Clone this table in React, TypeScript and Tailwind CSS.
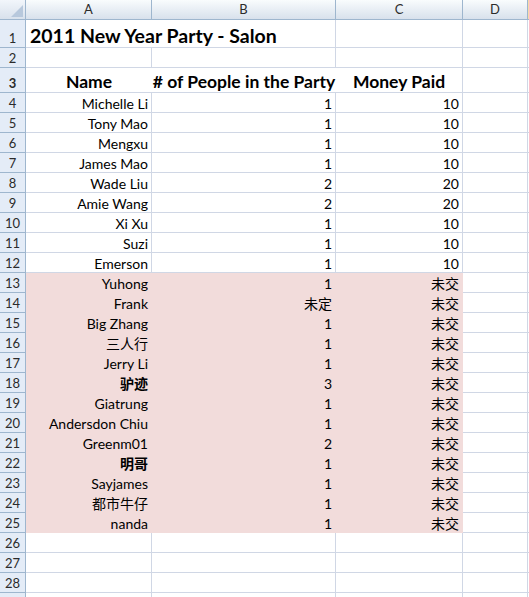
import React from 'react';

type Row = {
  name: string;
  people: string;
  money: string;
  pink?: boolean;
  boldName?: boolean;
};

const data: Row[] = [
  { name: 'Michelle Li', people: '1', money: '10' },
  { name: 'Tony Mao', people: '1', money: '10' },
  { name: 'Mengxu', people: '1', money: '10' },
  { name: 'James Mao', people: '1', money: '10' },
  { name: 'Wade Liu', people: '2', money: '20' },
  { name: 'Amie Wang', people: '2', money: '20' },
  { name: 'Xi Xu', people: '1', money: '10' },
  { name: 'Suzi', people: '1', money: '10' },
  { name: 'Emerson', people: '1', money: '10' },
  { name: 'Yuhong', people: '1', money: '未交', pink: true },
  { name: 'Frank', people: '未定', money: '未交', pink: true },
  { name: 'Big Zhang', people: '1', money: '未交', pink: true },
  { name: '三人行', people: '1', money: '未交', pink: true },
  { name: 'Jerry Li', people: '1', money: '未交', pink: true },
  { name: '驴迹', people: '3', money: '未交', pink: true, boldName: true },
  { name: 'Giatrung', people: '1', money: '未交', pink: true },
  { name: 'Andersdon Chiu', people: '1', money: '未交', pink: true },
  { name: 'Greenm01', people: '2', money: '未交', pink: true },
  { name: '明哥', people: '1', money: '未交', pink: true, boldName: true },
  { name: 'Sayjames', people: '1', money: '未交', pink: true },
  { name: '都市牛仔', people: '1', money: '未交', pink: true },
  { name: 'nanda', people: '1', money: '未交', pink: true },
];

const RowHead = ({ n, h }: { n?: number; h: string }) => (
  <div
    className={`w-[26px] shrink-0 ${h} bg-[#e4ecf7] border-r border-b border-[#9eb6ce] flex items-end justify-center pb-[1px] text-[13px] leading-[16px] text-[#2b2b2b]`}
  >
    {n}
  </div>
);

const ColHead = ({ label, w }: { label: string; w: string }) => (
  <div
    className={`${w} shrink-0 h-[20px] bg-gradient-to-b from-[#f9fcfd] to-[#d8e1ec] border-r border-b border-[#9eb6ce] flex items-center justify-center text-[13px] text-[#2b2b2b]`}
  >
    {label}
  </div>
);

export default function App() {
  const grid = 'border-[#d0d7e5]';
  return (
    <div
      className="w-[529px] h-[597px] overflow-hidden bg-white text-black"
      style={{ fontFamily: 'Lato, "Noto Sans CJK SC", sans-serif' }}
    >
      {/* column headers */}
      <div className="flex">
        <div className="w-[26px] shrink-0 h-[20px] bg-gradient-to-b from-[#f2f6fb] to-[#d8e1ec] border-r border-b border-[#9eb6ce] relative">
          <svg className="absolute right-[2px] bottom-[2px]" width="12" height="12" viewBox="0 0 12 12">
            <polygon points="12,0 12,12 0,12" fill="#b7c8dc" />
          </svg>
        </div>
        <ColHead label="A" w="w-[126px]" />
        <ColHead label="B" w="w-[184px]" />
        <ColHead label="C" w="w-[127px]" />
        <ColHead label="D" w="w-[65px]" />
        <div className="flex-1 h-[20px] bg-[#f8d9a8] border-b border-[#9eb6ce]" />
      </div>

      {/* row 1 */}
      <div className="flex">
        <RowHead n={1} h="h-[28px]" />
        <div className={`w-[310px] shrink-0 h-[28px] border-r border-b ${grid} flex items-end pl-[4px] text-[19.5px] leading-[23px] font-bold whitespace-nowrap`}>
          2011 New Year Party - Salon
        </div>
        <div className={`w-[127px] shrink-0 h-[28px] border-r border-b ${grid}`} />
        <div className={`w-[65px] shrink-0 h-[28px] border-r border-b ${grid}`} />
        <div className={`flex-1 h-[28px] border-b ${grid}`} />
      </div>

      {/* row 2 */}
      <div className="flex">
        <RowHead n={2} h="h-[20px]" />
        <div className={`w-[126px] shrink-0 h-[20px] border-r border-b ${grid}`} />
        <div className={`w-[184px] shrink-0 h-[20px] border-r border-b ${grid}`} />
        <div className={`w-[127px] shrink-0 h-[20px] border-r border-b ${grid}`} />
        <div className={`w-[65px] shrink-0 h-[20px] border-r border-b ${grid}`} />
        <div className={`flex-1 h-[20px] border-b ${grid}`} />
      </div>

      {/* row 3 */}
      <div className="flex text-[17.5px] leading-[21px] font-bold">
        <RowHead n={3} h="h-[25px]" />
        <div className={`w-[126px] shrink-0 h-[25px] border-b ${grid} flex items-end justify-center`}>
          Name
        </div>
        <div className={`w-[184px] shrink-0 h-[25px] border-b ${grid} flex items-end justify-center whitespace-nowrap`}>
          # of People in the Party
        </div>
        <div className={`w-[127px] shrink-0 h-[25px] border-r border-b ${grid} flex items-end justify-center`}>
          Money Paid
        </div>
        <div className={`w-[65px] shrink-0 h-[25px] border-r border-b ${grid}`} />
        <div className={`flex-1 h-[25px] border-b ${grid}`} />
      </div>

      {/* data rows */}
      {data.map((r, i) => {
        const cell = r.pink ? 'bg-[#f2dcdb] border-[#f2dcdb]' : grid;
        return (
          <div key={i} className="flex text-[14px] leading-[17px]">
            <RowHead n={i + 4} h="h-[20px]" />
            <div
              className={`w-[126px] shrink-0 h-[20px] border-r border-b ${cell} flex items-end justify-end pr-[3px] whitespace-nowrap ${
                r.boldName ? 'font-bold' : ''
              }`}
            >
              {r.name}
            </div>
            <div className={`w-[184px] shrink-0 h-[20px] border-r border-b ${cell} flex items-end justify-end pr-[3px]`}>
              {r.people}
            </div>
            <div className={`w-[127px] shrink-0 h-[20px] border-r border-b ${cell} flex items-end justify-end pr-[3px]`}>
              {r.money}
            </div>
            <div className={`w-[65px] shrink-0 h-[20px] border-r border-b ${grid}`} />
            <div className={`flex-1 h-[20px] border-b ${grid}`} />
          </div>
        );
      })}

      {/* empty rows */}
      {[26, 27, 28, 29].map((n) => (
        <div key={n} className="flex">
          <RowHead n={n < 29 ? n : undefined} h="h-[20px]" />
          <div className={`w-[126px] shrink-0 h-[20px] border-r border-b ${grid}`} />
          <div className={`w-[184px] shrink-0 h-[20px] border-r border-b ${grid}`} />
          <div className={`w-[127px] shrink-0 h-[20px] border-r border-b ${grid}`} />
          <div className={`w-[65px] shrink-0 h-[20px] border-r border-b ${grid}`} />
          <div className={`flex-1 h-[20px] border-b ${grid}`} />
        </div>
      ))}
    </div>
  );
}
